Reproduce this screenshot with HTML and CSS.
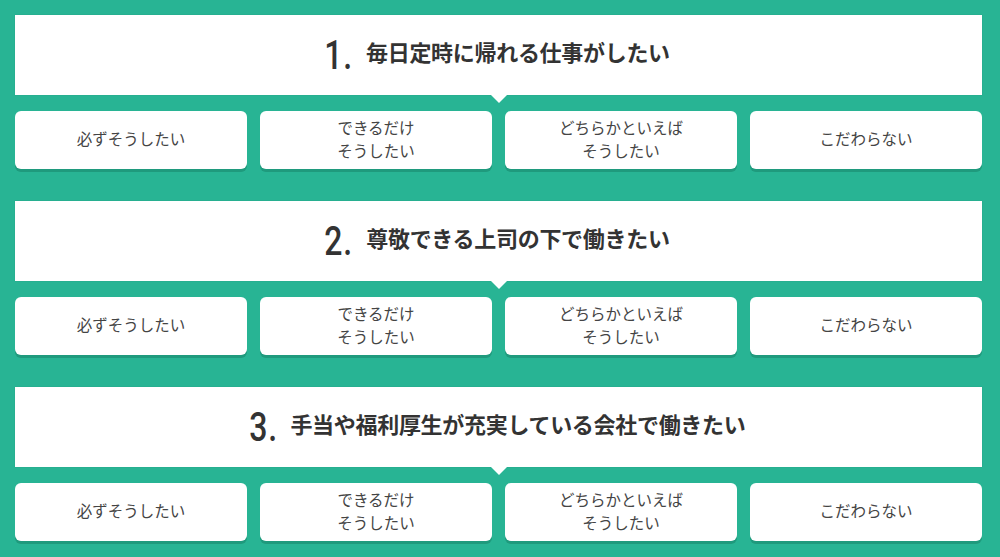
FILE: index.html
```html
<!DOCTYPE html>
<html lang="ja">
<head>
  <meta charset="UTF-8">
  <title>働き方診断</title>
  <link rel="stylesheet" href="styles.css">
</head>
<body>
  <div class="quiz">
    <div class="question">
      <h2 class="q-title"><span class="q-num">1.</span>毎日定時に帰れる仕事がしたい</h2>
      <div class="answers">
        <button class="answer">必ずそうしたい</button>
        <button class="answer">できるだけ<br>そうしたい</button>
        <button class="answer">どちらかといえば<br>そうしたい</button>
        <button class="answer">こだわらない</button>
      </div>
    </div>

    <div class="question">
      <h2 class="q-title"><span class="q-num">2.</span>尊敬できる上司の下で働きたい</h2>
      <div class="answers">
        <button class="answer">必ずそうしたい</button>
        <button class="answer">できるだけ<br>そうしたい</button>
        <button class="answer">どちらかといえば<br>そうしたい</button>
        <button class="answer">こだわらない</button>
      </div>
    </div>

    <div class="question">
      <h2 class="q-title"><span class="q-num">3.</span>手当や福利厚生が充実している会社で働きたい</h2>
      <div class="answers">
        <button class="answer">必ずそうしたい</button>
        <button class="answer">できるだけ<br>そうしたい</button>
        <button class="answer">どちらかといえば<br>そうしたい</button>
        <button class="answer">こだわらない</button>
      </div>
    </div>
  </div>
</body>
</html>
```

FILE: styles.css
```css
body {
  margin: 0;
  background: #28b494;
  font-family: "Noto Sans CJK JP", "Noto Sans", sans-serif;
  color: #333;
}
.quiz {
  width: 967px;
  padding: 15px 18px 0 15px;
}
.question {
  margin-bottom: 32px;
}
.q-title {
  position: relative;
  box-sizing: border-box;
  margin: 0 0 16px;
  height: 80px;
  padding-bottom: 8px;
  background: #fff;
  box-shadow: 0 0 1px rgba(0,0,0,0.15);
  display: flex;
  justify-content: center;
  align-items: center;
  font-size: 22px;
  font-weight: 700;
  letter-spacing: -0.3px;
  color: #333;
}
.q-title::after {
  content: "";
  position: absolute;
  left: 50%;
  bottom: -8px;
  margin-left: -8px;
  border-left: 8px solid transparent;
  border-right: 8px solid transparent;
  border-top: 8px solid #fff;
}
.q-num {
  display: inline-block;
  font-family: Roboto, "DejaVu Sans", sans-serif;
  font-weight: 500;
  font-size: 40px;
  line-height: 40px;
  color: #333;
  transform: scaleX(0.8);
  transform-origin: right center;
  margin-left: -10px;
  margin-right: 13px;
  position: relative;
  top: 5px;
  letter-spacing: 1px;
}
.answers {
  display: grid;
  grid-template-columns: repeat(4, 1fr);
  gap: 13px;
}
.answer {
  height: 58px;
  padding: 0 0 3px;
  border: none;
  border-radius: 6px;
  background: #fff;
  box-shadow: 0 3px 0 #1f9a7d;
  font-family: "Noto Sans CJK JP", "Noto Sans", sans-serif;
  font-size: 15.5px;
  line-height: 23px;
  color: #444;
  cursor: pointer;
}
```
